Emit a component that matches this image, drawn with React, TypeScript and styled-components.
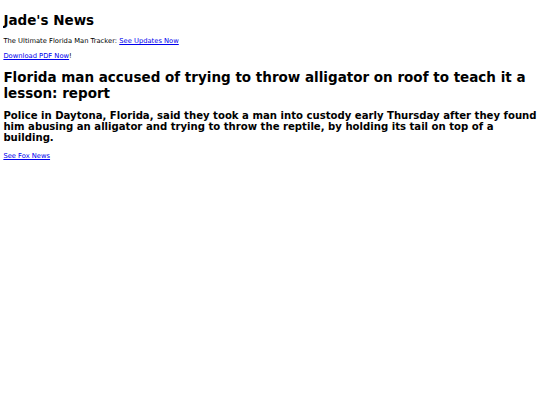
import React from "react";
import styled, { createGlobalStyle } from "styled-components";

// the reference is a 1280px wide page shrunk to 540px, so every size is scaled by 540/1280
const GlobalStyle = createGlobalStyle`
  body {
    margin: 3.375px;
    background: #ffffff;
    color: #000000;
    font-family: "DejaVu Sans", Verdana, sans-serif;
  }
`;

const Page = styled.div`
  display: flow-root;
`;

const Title = styled.h1`
  font-size: 13.5px;
  font-weight: bold;
  margin: 0.67em 0;
`;

const Headline = styled.h1`
  font-size: 13.5px;
  font-weight: bold;
  margin: 0.67em 0;
`;

const Lede = styled.h2`
  font-size: 10.125px;
  font-weight: bold;
  margin: 0.83em 0;
`;

const Line = styled.p`
  font-size: 6.75px;
  margin: 1em 0;
`;

const Link = styled.a`
  color: #0000ee;
  text-decoration: underline;
`;

export default function App() {
  return (
    <Page>
      <GlobalStyle />
      <Title>Jade's News</Title>
      <Line>
        The Ultimate Florida Man Tracker: <Link href="#">See Updates Now</Link>
      </Line>
      <Line>
        <Link href="#">Download PDF Now</Link>!
      </Line>
      <Headline>
        Florida man accused of trying to throw alligator on roof to teach it a
        lesson: report
      </Headline>
      <Lede>
        Police in Daytona, Florida, said they took a man into custody early
        Thursday after they found him abusing an alligator and trying to throw
        the reptile, by holding its tail on top of a building.
      </Lede>
      <Line>
        <Link href="#">See Fox News</Link>
      </Line>
    </Page>
  );
}
